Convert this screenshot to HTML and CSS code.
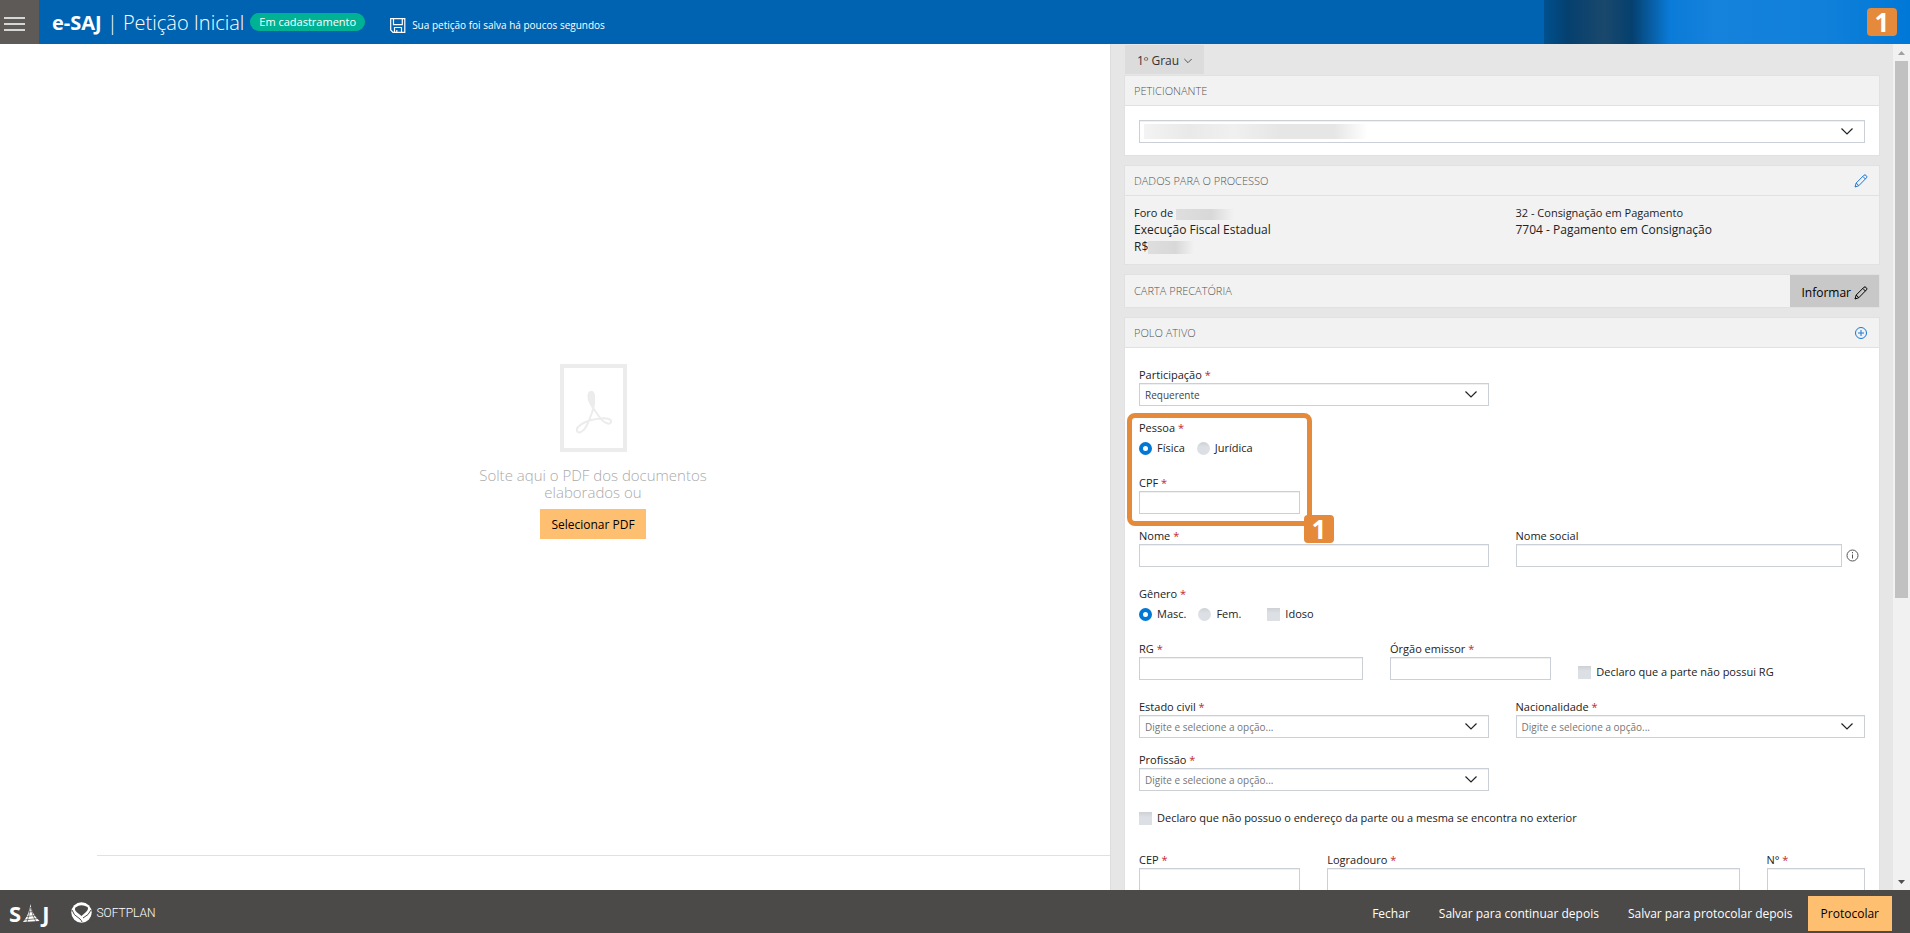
FILE: index.html
```html
<!DOCTYPE html>
<html lang="pt-BR">
<head>
<meta charset="utf-8">
<meta name="viewport" content="width=device-width, initial-scale=1">
<title>e-SAJ | Petição Inicial</title>
<link rel="stylesheet" href="styles.css">
</head>
<body class="app">
<svg class="sprite" aria-hidden="true">
  <symbol id="chevron" viewBox="0 0 14 9"><path d="M1.500 1.500 7 7l5.500-5.500" fill="none" stroke="currentColor" stroke-width="1.200"/></symbol>
  <symbol id="pencil" viewBox="0 0 14 14"><path d="M1 13l1.200-4L10 1.200q1-.8 2 .2l.5.500q.9 1 0 1.900L4.800 11.700zM2.200 9l2.600 2.700M8.800 2.400l2.700 2.700" fill="none" stroke="currentColor" stroke-width="1"/></symbol>
</svg>

<header class="topbar">
  <button class="menu" type="button" aria-label="Menu">
    <svg width="22" height="14" viewBox="0 0 22 14" aria-hidden="true"><path d="M0 1h21M0 7h21M0 13h21" stroke="#fff" stroke-width="1.500"/></svg>
  </button>
  <h1 class="brand"><strong>e-SAJ</strong> | Petição Inicial</h1>
  <span class="status">Em cadastramento</span>
  <span class="saved">
    <svg width="16" height="15" viewBox="0 0 16 15" aria-hidden="true"><path d="M.7.700h14.100v13.600H3L.7 12zM3.500.700v6h8.800v-6M4.500 14.300V9.500h7v4.800M6.800 14v-2" fill="none" stroke="#fff" stroke-width="1.200"/></svg>
    Sua petição foi salva há poucos segundos
  </span>
  <div class="user"><span class="mark">1</span></div>
</header>

<main class="work">
  <section class="viewer">
    <div class="drop">
      <svg width="67" height="88" viewBox="0 0 67 88" fill="none" stroke="#ececec" aria-hidden="true">
        <rect x="2" y="2" width="63" height="84" stroke-width="4"/>
        <path d="M31.500 28c-3.500 0-3.500 4.500-2.400 8.500 1 3.500 3.400 6.500 5.400 9.500 2.600 4 4.500 7.500 8.500 11 3 2.500 7.500 4 8 1 .5-3.500-5-4-10-3.500-6 .5-12 1.500-17.500 4.500-4 2.200-7.500 5.500-6.500 8 1.500 3 6.500 1 9.500-5 3-6.500 7-15 7.500-22 .3-6 .5-12-2.500-12z" stroke-width="2"/>
        <path d="M31.500 27.500c-3.500 0-3.500 4.500-2.400 8.500.8 2.600 2.400 4.800 4 7 .8-3.500.9-6.500.9-9.500 0-3-.5-6-2.500-6z" fill="#ececec" stroke-width="1"/>
      </svg>
      <p class="drop-text">Solte aqui o PDF dos documentos elaborados ou</p>
      <button class="primary" type="button">Selecionar PDF</button>
    </div>
  </section>

  <section class="side">
    <form class="panel">
      <button class="tab" type="button">1º Grau <svg width="10" height="6" aria-hidden="true"><use href="#chevron"/></svg></button>

      <section class="card">
        <div class="card-head"><h2>PETICIONANTE</h2></div>
        <div class="card-body single">
          <div class="select">
            <select aria-label="Peticionante"><option></option></select>
            <span class="redacted long"></span>
            <svg width="14" height="9" aria-hidden="true"><use href="#chevron"/></svg>
          </div>
        </div>
      </section>

      <section class="card">
        <div class="card-head">
          <h2>DADOS PARA O PROCESSO</h2>
          <button class="icon" type="button" aria-label="Editar"><svg width="14" height="14" aria-hidden="true"><use href="#pencil"/></svg></button>
        </div>
        <div class="summary">
          <div>
            <p class="small">Foro de <span class="redacted place"></span></p>
            <p>Execução Fiscal Estadual</p>
            <p>R$<span class="redacted money"></span></p>
          </div>
          <div>
            <p class="small">32 - Consignação em Pagamento</p>
            <p>7704 - Pagamento em Consignação</p>
          </div>
        </div>
      </section>

      <section class="card">
        <div class="card-head action">
          <h2>CARTA PRECATÓRIA</h2>
          <button class="inform" type="button">Informar <svg width="14" height="14" aria-hidden="true"><use href="#pencil"/></svg></button>
        </div>
      </section>

      <section class="card">
        <div class="card-head">
          <h2>POLO ATIVO</h2>
          <button class="icon" type="button" aria-label="Adicionar"><svg width="14" height="14" viewBox="0 0 14 14" fill="none" stroke="currentColor" aria-hidden="true"><circle cx="7" cy="7" r="5.500"/><path d="M4 7h6M7 4v6"/></svg></button>
        </div>
        <div class="card-body">
          <div class="row">
            <div class="field w6">
              <label for="part">Participação <i>*</i></label>
              <div class="select"><select id="part"><option>Requerente</option></select><svg width="14" height="9" aria-hidden="true"><use href="#chevron"/></svg></div>
            </div>
          </div>

          <div class="callout">
            <fieldset>
              <legend>Pessoa <i>*</i></legend>
              <div class="choices">
                <label><input type="radio" name="pessoa" checked> Física</label>
                <label><input type="radio" name="pessoa"> Jurídica</label>
              </div>
            </fieldset>
            <div class="row loose">
              <div class="field w3"><label for="cpf">CPF <i>*</i></label><input id="cpf" type="text"></div>
            </div>
            <div class="outline"><span class="mark">1</span></div>
          </div>

          <div class="row">
            <div class="field w6"><label for="nome">Nome <i>*</i></label><input id="nome" type="text"></div>
            <div class="field w6">
              <label for="social">Nome social</label>
              <div class="with-info">
                <input id="social" type="text">
                <svg width="13" height="13" viewBox="0 0 13 13" fill="none" stroke="#555" aria-hidden="true"><circle cx="6.500" cy="6.500" r="5.500"/><path d="M6.500 5.500v4M6.500 3v1.300"/></svg>
              </div>
            </div>
          </div>

          <fieldset class="loose">
            <legend>Gênero <i>*</i></legend>
            <div class="choices">
              <label><input type="radio" name="genero" checked> Masc.</label>
              <label><input type="radio" name="genero"> Fem.</label>
              <label class="apart"><input type="checkbox"> Idoso</label>
            </div>
          </fieldset>

          <div class="row loose">
            <div class="field w4"><label for="rg">RG <i>*</i></label><input id="rg" type="text"></div>
            <div class="field w3"><label for="orgao">Órgão emissor <i>*</i></label><input id="orgao" type="text"></div>
            <label class="check w5"><input type="checkbox"> Declaro que a parte não possui RG</label>
          </div>

          <div class="row loose">
            <div class="field w6">
              <label for="civil">Estado civil <i>*</i></label>
              <div class="select"><select id="civil" class="empty"><option>Digite e selecione a opção...</option></select><svg width="14" height="9" aria-hidden="true"><use href="#chevron"/></svg></div>
            </div>
            <div class="field w6">
              <label for="nac">Nacionalidade <i>*</i></label>
              <div class="select"><select id="nac" class="empty"><option>Digite e selecione a opção...</option></select><svg width="14" height="9" aria-hidden="true"><use href="#chevron"/></svg></div>
            </div>
          </div>

          <div class="row">
            <div class="field w6">
              <label for="prof">Profissão <i>*</i></label>
              <div class="select"><select id="prof" class="empty"><option>Digite e selecione a opção...</option></select><svg width="14" height="9" aria-hidden="true"><use href="#chevron"/></svg></div>
            </div>
          </div>

          <label class="check loose"><input type="checkbox"> Declaro que não possuo o endereço da parte ou a mesma se encontra no exterior</label>

          <div class="row far">
            <div class="field w3"><label for="cep">CEP <i>*</i></label><input id="cep" type="text"></div>
            <div class="field w7"><label for="log">Logradouro <i>*</i></label><input id="log" type="text"></div>
            <div class="field w2"><label for="num">N° <i>*</i></label><input id="num" type="text"></div>
          </div>
        </div>
      </section>
    </form>
    <div class="scroll" aria-hidden="true">
      <svg width="7" height="4" viewBox="0 0 7 4"><path d="M0 4 3.500 0 7 4z" fill="#a0a0a0"/></svg>
      <div class="track"><div class="thumb"></div></div>
      <svg width="7" height="4" viewBox="0 0 7 4"><path d="M0 0 3.500 4 7 0z" fill="#505050"/></svg>
    </div>
  </section>
</main>

<footer class="bottombar">
  <div class="saj" role="img" aria-label="SAJ">
    <span>S</span>
    <svg width="17" height="19" viewBox="0 0 17 19" fill="#fff" aria-hidden="true"><path d="M7.500 0Q8 9 16.500 17L0 18Q6 11 7.500 0z"/><path d="M3 12.500 13 11.500M1 16l14-1.500M5.500 8l5-.5M7.500 3Q6 12 4 18M8 3q1 8 5 15" fill="none" stroke="#4c4a48" stroke-width=".7"/></svg>
    <span>J</span>
  </div>
  <div class="softplan">
    <svg width="21" height="21" viewBox="0 0 21 21" aria-hidden="true"><circle cx="10.500" cy="10.500" r="10.200" fill="#fff"/><path d="M4.500 5.500Q10 1.500 16.500 5q1.500 2-1.500 5l-4.500 4L5.500 10Q3 7.500 4.500 5.500z" fill="#4c4a48"/><path d="M1 8q1 5 8 9 1.500 1.500 2 3M20 8q-2 5-8 8" fill="none" stroke="#4c4a48" stroke-width="1"/></svg>
    <span>SOFTPLAN</span>
  </div>
  <nav class="actions">
    <button type="button">Fechar</button>
    <button type="button">Salvar para continuar depois</button>
    <button type="button">Salvar para protocolar depois</button>
    <button class="primary" type="button">Protocolar</button>
  </nav>
</footer>
</body>
</html>
```
FILE: styles.css
```css
* { box-sizing: border-box; }

.app {
  margin: 0;
  height: 100vh;
  display: grid;
  grid-template-rows: 44px minmax(0, 1fr) 43px;
  font: 11px/16px "Open Sans", "Noto Sans", sans-serif;
  color: #222;
  background: #fff;
  overflow: hidden;
}
.sprite { display: none; }
button, input, select { font: inherit; color: inherit; margin: 0; border-radius: 0; }
button { border: 0; padding: 0; background: none; cursor: pointer; }
h1, h2, p { margin: 0; font-weight: 400; }
i { color: #c0272d; font-style: normal; }

/* top bar */
.topbar { display: flex; align-items: stretch; background: #0063b1; color: #fff; }
.menu { width: 39px; padding: 3px 0 0 4px; background: #5d5a58; display: flex; align-items: center; }
.brand { margin-left: 13px; font-size: 20px; line-height: 45px; font-weight: 300; white-space: nowrap; }
.brand strong { font-weight: 700; }
.status {
  align-self: center;
  margin-left: 6px;
  padding: 0 9px;
  border-radius: 9px;
  background: #00b294;
  line-height: 18px;
}
.saved { display: flex; align-items: center; gap: 6px; margin-left: 25px; padding-top: 6px; font-size: 10px; white-space: nowrap; }
.user {
  margin-left: auto;
  width: 366px;
  display: flex;
  align-items: center;
  justify-content: flex-end;
  padding-right: 13px;
  background: linear-gradient(90deg, #00508e 0, #05406f 24px, #1a486c 60px, #05406f 88px, #0a7bd8 126px, #1582dc 170px, #1080da 280px, #0078d7 366px);
}
.mark {
  width: 30px;
  height: 28px;
  border-radius: 4px;
  background: #e5893b;
  color: #fff;
  font: 700 26px/28px "Noto Sans", sans-serif;
  text-align: center;
}

/* work area */
.work { display: grid; grid-template-columns: 111fr 80fr; min-height: 0; }
.viewer {
  margin: 0 0 34px 97px;
  padding-right: 21px;
  border-bottom: 1px solid #e1e1e1;
  display: flex;
  align-items: center;
  justify-content: center;
}
.drop { width: 240px; display: flex; flex-direction: column; align-items: center; padding-top: 3px; }
.drop-text { margin: 15px 0 8px; font-size: 15px; line-height: 17px; font-weight: 300; color: #aaa; text-align: center; }
.primary { background: #ffbf70; color: #000; font-size: 12px; }
.drop .primary { height: 30px; padding: 2px 11px 0; }

.side { display: flex; min-width: 0; min-height: 0; background: #e6e6e6; border-left: 1px solid #ddd; }
.panel { flex: 1; min-width: 0; overflow: hidden; padding: 1px 13px 0; }
.scroll { width: 17px; background: #f1f1f1; display: flex; flex-direction: column; align-items: center; padding: 7px 2px 6px; }
.track { flex: 1; width: 100%; padding: 6px 0; }
.thumb { height: 66%; background: #c1c1c1; }

.tab { display: flex; align-items: center; gap: 4px; height: 29px; padding: 2px 11px 0 12px; margin: 0 0 1px 1px; background: #dcdcdc; font-size: 12px; color: #333; }

.card { border: 1px solid #e1e1e1; margin-bottom: 9px; background: #f2f2f2; }
.card-head { display: flex; justify-content: space-between; align-items: center; height: 30px; padding: 0 11px 0 9px; border-bottom: 1px solid #e1e1e1; }
.card-head h2 { font-size: 11px; font-weight: 300; color: #555; }
.card-head.action { height: 32px; padding-right: 0; border: 0; }
.icon { color: #1a78d6; display: flex; }
.inform { display: flex; align-items: center; gap: 3px; height: 32px; padding: 3px 11px 0; background: #c8c8c8; font-size: 12px; color: #000; }
.card-body { background: #fff; padding: 19px 14px; }
.card-body.single { padding: 14px 14px 12px; }
.summary { display: grid; grid-template-columns: 1fr 1fr; column-gap: 27px; padding: 9px 9px 0; min-height: 68px; font-size: 12px; line-height: 17px; }
.summary .small { font-size: 11px; line-height: 16px; }

/* blurred values */
.redacted { display: inline-block; vertical-align: middle; background: linear-gradient(90deg, #dedede, #d8d8d8 60%, transparent); }
.place { width: 58px; height: 11px; }
.money { width: 46px; height: 13px; }
.long { width: 224px; height: 15px; margin-left: 5px; background: linear-gradient(90deg, #f3f3f3, #e9e9e9 20%, #f0f0f0 40%, #e6e6e6 60%, #e6e6e6 85%, transparent); }

/* form */
.row { display: grid; grid-template-columns: repeat(12, minmax(0, 1fr)); column-gap: 27px; }
.card-body > * + * { margin-top: 14px; }
.card-body > .loose, .callout > .loose { margin-top: 19px; }
.card-body > .far { margin-top: 26px; }
.w2 { grid-column: span 2; }
.w3 { grid-column: span 3; }
.w4 { grid-column: span 4; }
.w5 { grid-column: span 5; }
.w6 { grid-column: span 6; }
.w7 { grid-column: span 7; }
.field > label, legend { display: block; padding: 0; line-height: 16px; }
.field input, select {
  display: block;
  width: 100%;
  height: 23px;
  padding: 0 5px;
  border: 1px solid #cbcfd6;
  background: #fff;
  box-shadow: inset 0 1px 0 #eef0f2;
  color: #444;
  font-size: 10px;
  appearance: none;
}
select.empty { color: #767676; }
.select { display: grid; align-items: center; }
.select > * { grid-area: 1 / 1; }
.select svg { justify-self: end; margin-right: 11px; color: #222; pointer-events: none; }
.with-info { display: grid; grid-template-columns: 1fr 13px; column-gap: 4px; align-items: center; padding-right: 6px; }

fieldset { border: 0; margin: 0; padding: 0; min-width: 0; }
.choices { display: flex; gap: 12px; margin-top: 4px; }
.choices label, .check { display: flex; align-items: center; gap: 5px; line-height: 16px; }
.choices .apart { margin-left: 14px; }
.row .check { align-self: end; }
input[type="radio"], input[type="checkbox"] {
  appearance: none;
  flex: none;
  width: 13px;
  height: 13px;
  background: linear-gradient(#cdd1d4, #dce0e5 5px);
}
input[type="radio"] { border-radius: 50%; }
input[type="radio"]:checked { border: 4px solid #0078d7; background: #fff; }

.callout { position: relative; }
.outline {
  position: absolute;
  inset: -7px auto -12px -12px;
  width: 185px;
  border: 5px solid #e5893b;
  border-radius: 8px;
  pointer-events: none;
}
.outline .mark { position: absolute; right: -27px; bottom: -22px; }

/* bottom bar */
.bottombar { display: flex; align-items: center; background: #4c4a48; color: #fff; }
.saj { display: flex; align-items: flex-end; gap: 2px; margin-left: 9px; padding-top: 3px; font: 700 22px/19px "Open Sans", sans-serif; }
.softplan { display: flex; align-items: center; gap: 4px; margin-left: 22px; padding-top: 2px; font: 300 12px/20px Roboto, sans-serif; }
.actions { display: flex; align-items: center; gap: 29px; margin-left: auto; padding: 4px 18px 0 0; font-size: 12px; }
.actions .primary { height: 35px; padding: 0 13px; margin-left: -14px; }
```
